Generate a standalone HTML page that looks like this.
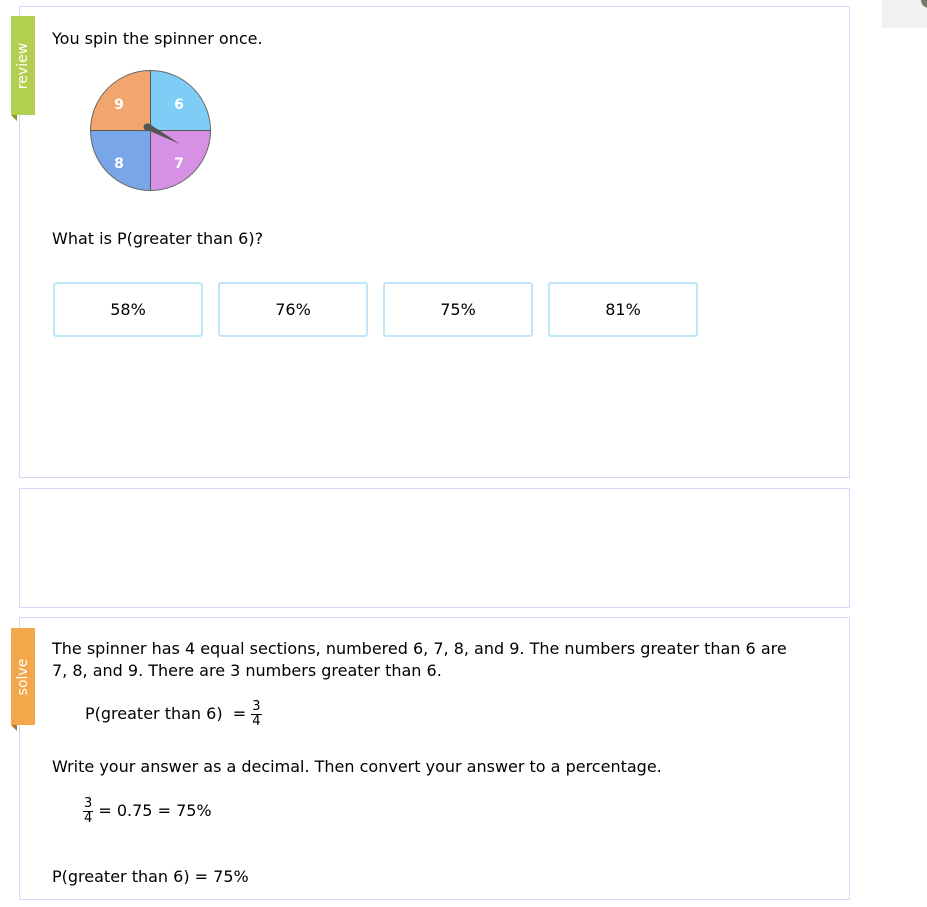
<!DOCTYPE html>
<html><head><style>
body{margin:0;width:927px;height:907px;background:#fff;position:relative;font-family:"DejaVu Sans","Liberation Sans",sans-serif;font-size:16px;color:#000;overflow:hidden}
.a{position:absolute;white-space:nowrap}
.box{position:absolute;border:1px solid #dad6fb;background:#fff}
.btn{position:absolute;top:282px;width:146px;height:51px;border:2px solid #bfe6f8;border-radius:3px;text-align:center;line-height:51px;font-size:16px}
.tab{position:absolute;left:11px;width:24px;color:#fff;font-size:14px}
.tab span{position:absolute;left:50%;top:50%;transform:translate(-50%,-50%) rotate(-90deg)}
.fr{display:inline-block;vertical-align:middle;text-align:center;font-size:13px;line-height:14px}
.fr .n{border-bottom:1px solid #000;padding:0 1px}
</style></head><body>
<div class="box" style="left:19px;top:6px;width:829px;height:470px"></div>
<div class="box" style="left:19px;top:488px;width:829px;height:118px"></div>
<div class="box" style="left:19px;top:617px;width:829px;height:281px"></div>
<div style="position:absolute;left:882px;top:0;width:45px;height:28px;background:#f1f1f1"></div>
<div style="position:absolute;left:921px;top:-8px;width:16px;height:16px;border-radius:50%;background:#77756c"></div>

<div class="tab" style="top:16px;height:99px;background:#b2cf50"><span>review</span></div>
<div style="position:absolute;left:11px;top:115px;border-top:6px solid #7f9a2c;border-left:6px solid transparent"></div>
<div class="tab" style="top:628px;height:97px;background:#f2a84a"><span>solve</span></div>
<div style="position:absolute;left:11px;top:725px;border-top:6px solid #b8731f;border-left:6px solid transparent"></div>

<div class="a" style="left:52px;top:29px">You spin the spinner once.</div>
<svg style="position:absolute;left:89px;top:69px" width="123" height="123" viewBox="0 0 123 123">
<path d="M61.5 61.5V1.5A60 60 0 0 0 1.5 61.5Z" fill="#f2a66e"/>
<path d="M61.5 61.5V1.5A60 60 0 0 1 121.5 61.5Z" fill="#7ecdf6"/>
<path d="M61.5 61.5H121.5A60 60 0 0 1 61.5 121.5Z" fill="#d690e4"/>
<path d="M61.5 61.5H1.5A60 60 0 0 0 61.5 121.5Z" fill="#79a6e8"/>
<circle cx="61.5" cy="61.5" r="60" fill="none" stroke="#666" stroke-width="1"/>
<path d="M61.5 1.5V121.5M1.5 61.5H121.5" stroke="#555" stroke-width="1"/>
<path d="M56 60L59 54L91 75Z" fill="#555"/><circle cx="58" cy="58" r="3.5" fill="#555"/>
<g fill="#fff" font-family="DejaVu Sans" font-weight="bold" font-size="14" text-anchor="middle">
<text x="30" y="40">9</text><text x="90" y="40">6</text><text x="30" y="99">8</text><text x="90" y="99">7</text></g>
</svg>
<div class="a" style="left:52px;top:229px">What is P(greater than 6)?</div>
<div class="btn" style="left:53px">58%</div>
<div class="btn" style="left:218px">76%</div>
<div class="btn" style="left:383px">75%</div>
<div class="btn" style="left:548px">81%</div>

<div class="a" style="left:52px;top:638px;line-height:22px">The spinner has 4 equal sections, numbered 6, 7, 8, and 9. The numbers greater than 6 are<br>7, 8, and 9. There are 3 numbers greater than 6.</div>
<div class="a" style="left:85px;top:700px">P(greater than 6) &nbsp;= <span class="fr"><div class="n">3</div><div>4</div></span></div>
<div class="a" style="left:52px;top:757px">Write your answer as a decimal. Then convert your answer to a percentage.</div>
<div class="a" style="left:83px;top:797px"><span class="fr"><div class="n">3</div><div>4</div></span> = 0.75 = 75%</div>
<div class="a" style="left:52px;top:867px">P(greater than 6) = 75%</div>
</body></html>
